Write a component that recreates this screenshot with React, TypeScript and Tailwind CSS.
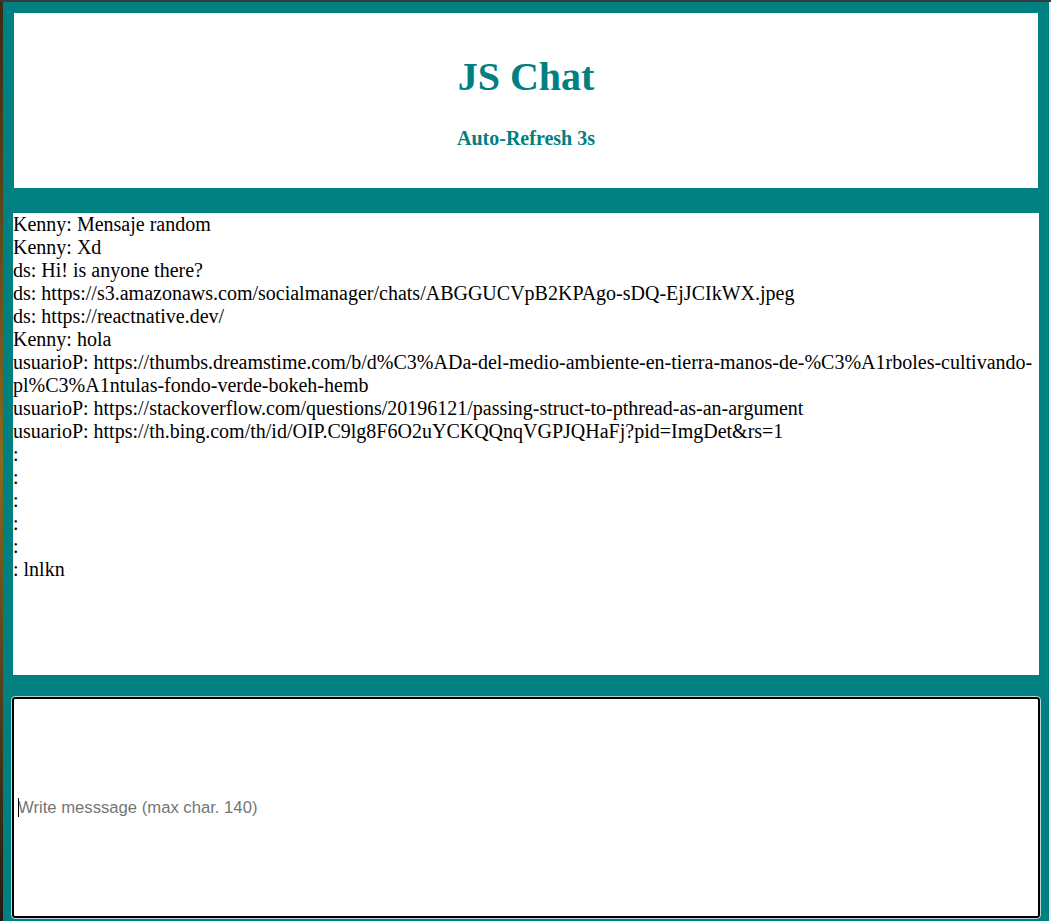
import React from "react";

const messages: { user: string; text: string }[] = [
  { user: "Kenny", text: "Mensaje random" },
  { user: "Kenny", text: "Xd" },
  { user: "ds", text: "Hi! is anyone there?" },
  { user: "ds", text: "https://s3.amazonaws.com/socialmanager/chats/ABGGUCVpB2KPAgo-sDQ-EjJCIkWX.jpeg" },
  { user: "ds", text: "https://reactnative.dev/" },
  { user: "Kenny", text: "hola" },
  {
    user: "usuarioP",
    text: "https://thumbs.dreamstime.com/b/d%C3%ADa-del-medio-ambiente-en-tierra-manos-de-%C3%A1rboles-cultivando-pl%C3%A1ntulas-fondo-verde-bokeh-hemb",
  },
  { user: "usuarioP", text: "https://stackoverflow.com/questions/20196121/passing-struct-to-pthread-as-an-argument" },
  { user: "usuarioP", text: "https://th.bing.com/th/id/OIP.C9lg8F6O2uYCKQQnqVGPJQHaFj?pid=ImgDet&rs=1" },
  { user: "", text: "" },
  { user: "", text: "" },
  { user: "", text: "" },
  { user: "", text: "" },
  { user: "", text: "" },
  { user: "", text: "lnlkn" },
];

export default function App() {
  return (
    <div className="h-[921px] w-full flex flex-col bg-[#1c1c1c] overflow-hidden">
      <div className="h-[2px] bg-[#3a3a3e]" />
      <div className="flex flex-1 min-h-0">
        <div className="w-[3px] bg-gradient-to-b from-[#3a2a14] via-[#8a6a1c] to-[#241a10]" />
        <main className="flex-1 bg-[#008080] flex flex-col font-['Liberation_Serif',serif] text-black">
          <header className="mt-[11px] mx-[11px] h-[175px] bg-white flex flex-col items-center pt-[41px]">
            <h1 className="text-[40px] leading-[46px] font-bold text-[#008080]">JS Chat</h1>
            <h4 className="mt-[27px] text-[20px] leading-[23px] font-bold text-[#008080]">Auto-Refresh 3s</h4>
          </header>

          <section className="mt-[25px] mx-[10px] h-[462px] bg-white overflow-hidden text-[20px] leading-[23px]">
            {messages.map((m, i) => (
              <div key={i}>
                {m.user}: {m.text}
              </div>
            ))}
          </section>

          <div className="mt-[22px] mx-[9px] relative">
            <input
              type="text"
              autoFocus
              maxLength={140}
              placeholder="Write messsage (max char. 140)"
              className="w-full h-[221px] bg-white border-2 border-black rounded-[3px] outline outline-1 outline-white/70 px-[4px] font-['Liberation_Sans',Arial,sans-serif] text-[16.67px] text-black placeholder:text-[#757575] caret-black"
            />
            {/* caret shown in the screenshot */}
            <span className="absolute left-[6px] top-[101px] h-[19px] w-px bg-black" />
          </div>
          <div className="h-[2px]" />
        </main>
        <div className="w-[2px] bg-[#ececec]" />
      </div>
    </div>
  );
}
